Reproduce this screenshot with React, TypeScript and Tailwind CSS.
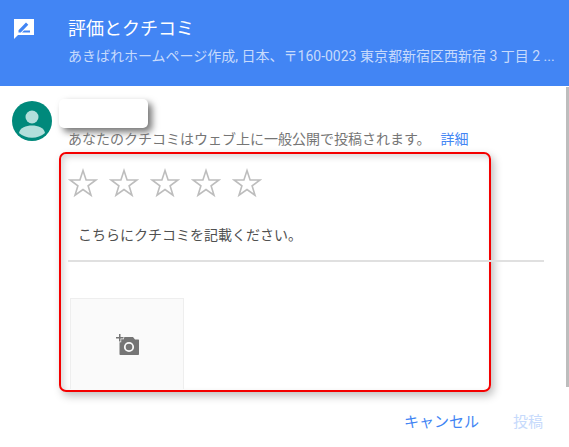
import React from "react";

const FONT = "font-['Roboto','Noto_Sans_CJK_JP',sans-serif]";

const Star = () => (
  <svg className="w-[30px] h-[30px]" viewBox="0 0 30 30" fill="none" stroke="#bdbdbd" strokeWidth="1.6" strokeLinejoin="miter">
    <path d="M15 2.600l3.100 9.300 9.800.1-7.800 5.800 2.900 9.400-8-5.600-8 5.600 2.900-9.400-7.800-5.800 9.800-.1z" />
  </svg>
);

const App = () => {
  return (
    <div className={`${FONT} relative w-[569px] h-[447px] bg-white overflow-hidden`}>
      {/* Header */}
      <div className="h-[86px] bg-[#4285f4] flex">
        <div className="w-[68px] pl-[14px] pt-[19px] shrink-0">
          <svg className="w-5 h-[20px]" viewBox="0 0 20 20">
            <path fill="#fff" d="M0 0H20V16H4L0 20z" />
            <path fill="#4285f4" d="M4.500 13.500v-2.300L12 3.500l2.300 2.300-7.500 7.700zM10 11.500h6v2h-8z" />
          </svg>
        </div>
        <div className="min-w-0 flex-1 pt-[16px]">
          <div className="text-[18px] leading-[26px] text-white">評価とクチコミ</div>
          <div className="mt-[3px] text-[14px] leading-[22px] text-[#c6dafc] whitespace-nowrap">
            あきばれホームページ作成, 日本、〒160-0023 東京都新宿区西新宿 3 丁目 2 ...
          </div>
        </div>
      </div>

      {/* Author row */}
      <div className="flex pl-[12px] pt-[16px]">
        <svg className="w-10 h-10 shrink-0 mt-[-1px]" viewBox="0 0 40 40">
          <circle cx="20" cy="20" r="20" fill="#00897b" />
          <circle cx="20" cy="16" r="6.500" fill="#b2dfdb" />
          <path fill="#b2dfdb" d="M7 32c1-5.500 7-7.500 13-7.500s12 2 13 7.500a20 20 0 0 1-26 0z" />
        </svg>
        <div className="ml-[7px] mt-[-3px]">
          <div className="w-[89px] h-[29px] rounded-[5px] bg-white shadow-[4px_4px_7px_rgba(0,0,0,0.55)]" />
          <div className="ml-[9px] mt-[1px] flex text-[14px] leading-[20px] text-[#757575] whitespace-nowrap">
            <span>あなたのクチコミはウェブ上に一般公開で投稿されます。</span>
            <span className="ml-[10px] text-[#4285f4]">詳細</span>
          </div>
        </div>
      </div>

      {/* Highlighted form */}
      <div className="ml-[59px] mt-[3px] w-[432px] h-[240px] border-2 border-[#f40000] rounded-[7px] shadow-[3px_4px_8px_rgba(0,0,0,0.25),inset_3px_3px_6px_rgba(0,0,0,0.15)] pl-[7px]">
        <div className="flex gap-[11px] pt-[14px]">
          <Star />
          <Star />
          <Star />
          <Star />
          <Star />
        </div>
        <div className="mt-[25px] pl-[10px] text-[14px] leading-[24px] text-[#505050] whitespace-nowrap">
          こちらにクチコミを記載ください。
        </div>
        <div className="mt-[13px] w-[476px] h-[2px] bg-[#e0e0e0]" />
        <div className="mt-[36px] ml-[2px] w-[114px] h-[91px] bg-[#fafafa] border border-b-0 border-[#eeeeee] flex items-start justify-center pt-[35px]">
          <svg className="w-[24px] h-[22px] ml-[1px]" viewBox="0 0 24 22">
            <path fill="#757575" d="M3.500 8h1.500V4h3.200V3H17l2 2.500h3.500A.800.800 0 0 1 23 6.300V20.200a.800.800 0 0 1-.800.800H4.300a.800.800 0 0 1-.800-.800z" />
            <circle cx="13" cy="13" r="4.200" fill="none" stroke="#fafafa" strokeWidth="1.800" />
            <path fill="#fafafa" d="M2.200 0h3v2.200h2.800v3.100H5.200v3H2.200v-3H0V2.200h2.200z" />
            <path fill="#757575" d="M3 0h1.500v3h3v1.500h-3v3H3v-3H0V3h3z" />
          </svg>
        </div>
      </div>

      {/* Actions */}
      <div className="mt-[18px] pr-[26px] flex justify-end text-[15px] leading-[24px]">
        <span className="text-[#4285f4]">キャンセル</span>
        <span className="ml-[34px] text-[#c6dafc]">投稿</span>
      </div>

      {/* Scrollbar thumb */}
      <div className="absolute right-0 top-[87px] w-[3px] h-[300px] bg-[#bdbdbd]" />
    </div>
  );
};

export default App;
